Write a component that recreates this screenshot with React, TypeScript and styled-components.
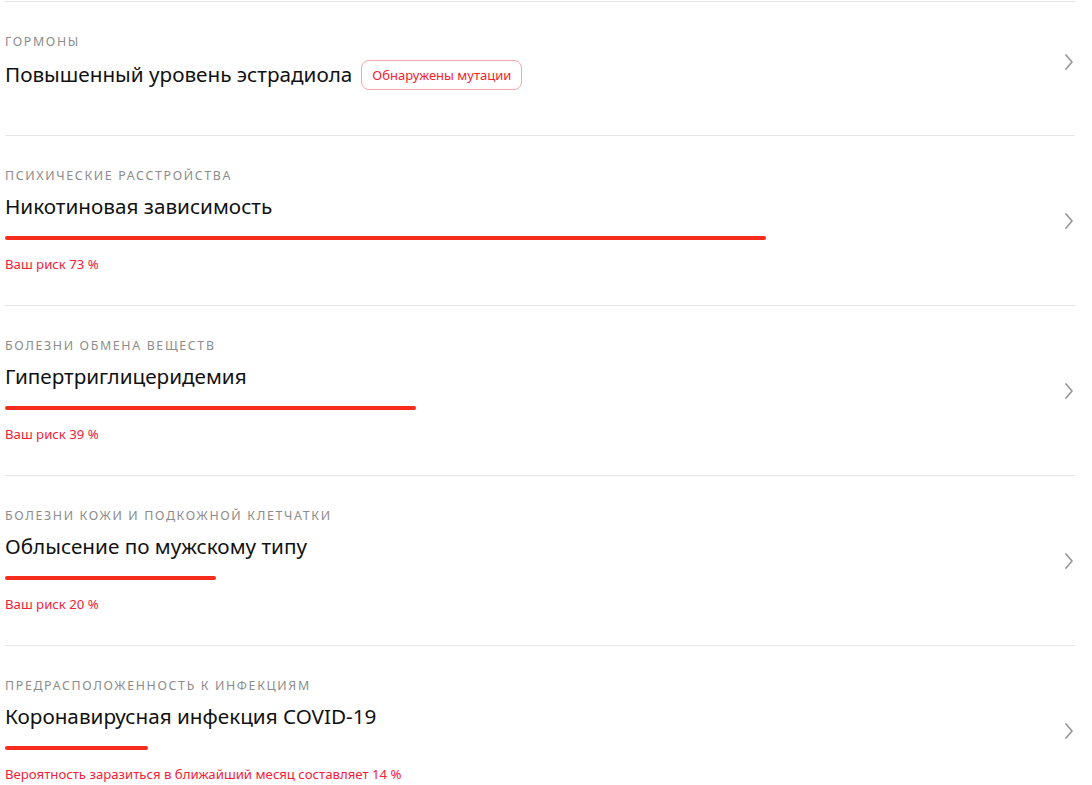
import React from "react";
import styled, { createGlobalStyle } from "styled-components";

const GlobalStyle = createGlobalStyle`
  html, body {
    margin: 0;
    padding: 0;
    background: #ffffff;
  }
  body {
    font-family: "Noto Sans", "Open Sans", Arial, sans-serif;
    color: #111111;
  }
`;

const List = styled.div`
  margin: 1px 17px 0 5px;
  display: flex;
  flex-direction: column;
`;

const Row = styled.div<{ $compact?: boolean }>`
  display: flex;
  align-items: center;
  border-top: 1px solid #e6e6e6;
  padding: 32px 0 ${(p) => (p.$compact ? "45px" : "32px")};
  cursor: pointer;
`;

const Content = styled.div`
  flex: 1;
  display: flex;
  flex-direction: column;
  min-width: 0;
`;

const Category = styled.div`
  font-size: 12.4px;
  line-height: 16px;
  letter-spacing: 1.65px;
  text-transform: uppercase;
  color: #8c8c8c;
`;

const TitleLine = styled.div`
  margin-top: 8px;
  display: flex;
  align-items: center;
  gap: 9px;
`;

const Title = styled.div`
  font-size: 20.7px;
  line-height: 28px;
  color: #111111;
`;

const Badge = styled.span`
  display: inline-flex;
  align-items: center;
  height: 30px;
  box-sizing: border-box;
  padding: 0 10px;
  border: 1px solid #f6a3ab;
  border-radius: 8px;
  font-size: 13px;
  color: #f5222d;
  margin-top: 2px;
`;

const Track = styled.div`
  margin-top: 16px;
  width: 1045px;
  height: 4px;
`;

const Bar = styled.div`
  height: 4px;
  border-radius: 2px;
  background: #f52b1e;
`;

const Risk = styled.div`
  margin-top: 15px;
  font-size: 13.2px;
  line-height: 18px;
  color: #f5203a;
`;

const Chevron = styled.svg`
  flex: none;
  width: 10px;
  height: 18px;
  margin-right: 1px;
`;

type Item = {
  category: string;
  title: string;
  badge?: string;
  bar?: number;
  risk?: string;
};

const items: Item[] = [
  {
    category: "Гормоны",
    title: "Повышенный уровень эстрадиола",
    badge: "Обнаружены мутации",
  },
  {
    category: "Психические расстройства",
    title: "Никотиновая зависимость",
    bar: 761,
    risk: "Ваш риск 73 %",
  },
  {
    category: "Болезни обмена веществ",
    title: "Гипертриглицеридемия",
    bar: 411,
    risk: "Ваш риск 39 %",
  },
  {
    category: "Болезни кожи и подкожной клетчатки",
    title: "Облысение по мужскому типу",
    bar: 211,
    risk: "Ваш риск 20 %",
  },
  {
    category: "Предрасположенность к инфекциям",
    title: "Коронавирусная инфекция COVID-19",
    bar: 143,
    risk: "Вероятность заразиться в ближайший месяц составляет 14 %",
  },
];

export default function App() {
  return (
    <>
      <GlobalStyle />
      <List>
        {items.map((it) => (
          <Row key={it.title} $compact={it.bar === undefined}>
            <Content>
              <Category>{it.category}</Category>
              <TitleLine>
                <Title>{it.title}</Title>
                {it.badge && <Badge>{it.badge}</Badge>}
              </TitleLine>
              {it.bar !== undefined && (
                <Track>
                  <Bar style={{ width: `${it.bar}px` }} />
                </Track>
              )}
              {it.risk && <Risk>{it.risk}</Risk>}
            </Content>
            <Chevron viewBox="0 0 10 18" fill="none">
              <path
                d="M2 2 L8 9 L2 16"
                stroke="#9a9a9a"
                strokeWidth="1.8"
                strokeLinecap="round"
                strokeLinejoin="round"
              />
            </Chevron>
          </Row>
        ))}
      </List>
    </>
  );
}
